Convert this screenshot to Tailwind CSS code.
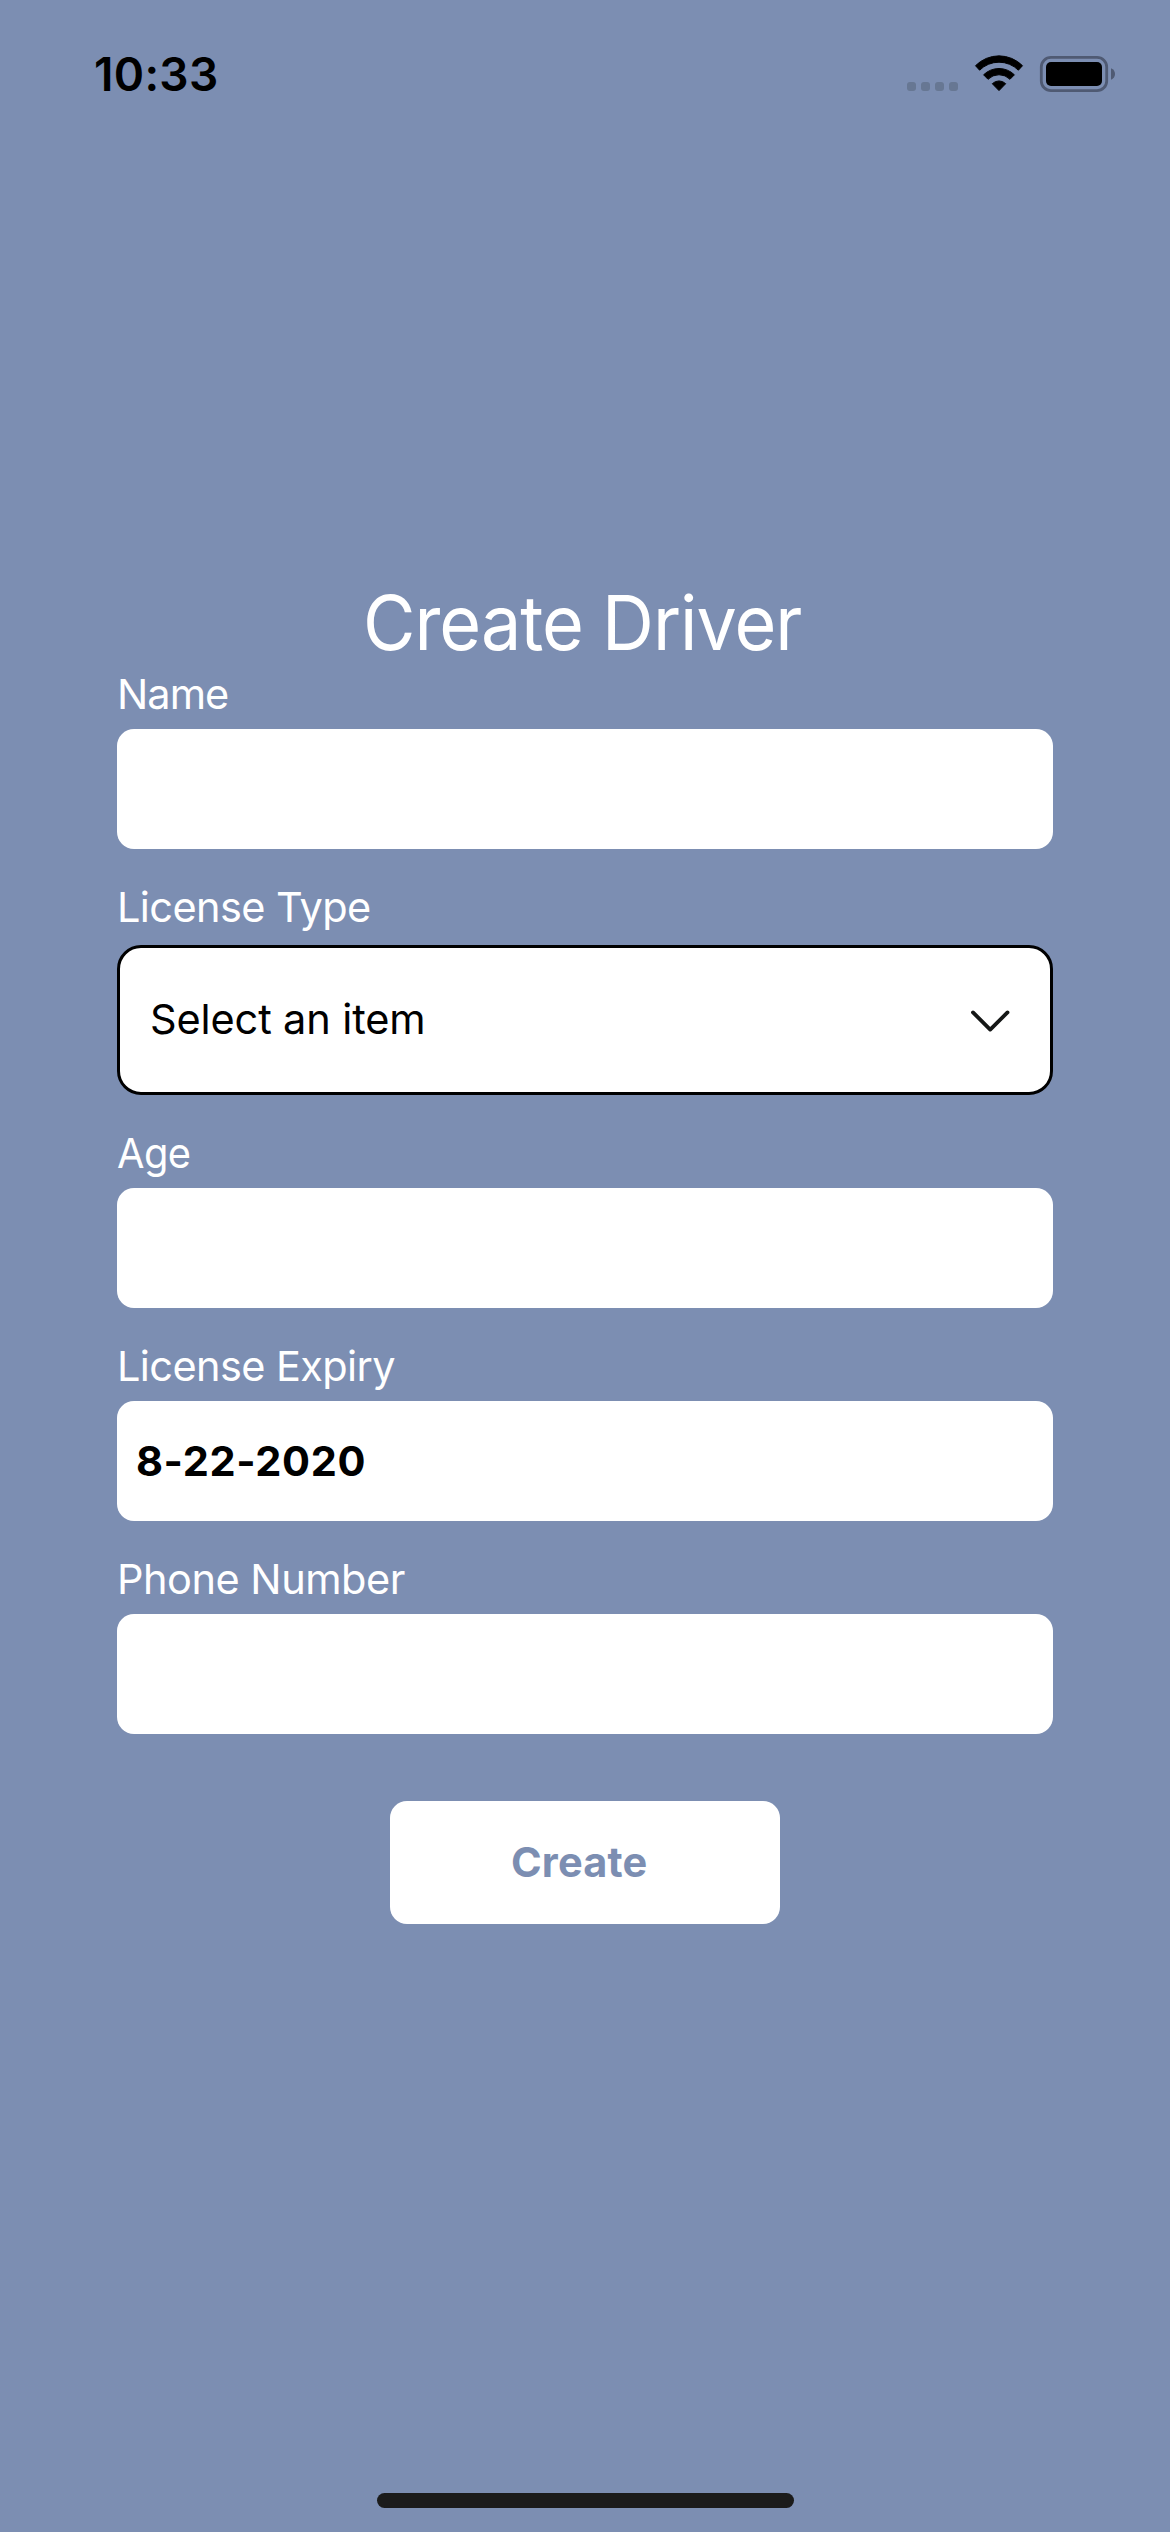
<!DOCTYPE html>
<html lang="en">
<head>
<meta charset="utf-8">
<title>Create Driver</title>
<script src="https://cdn.jsdelivr.net/npm/@tailwindcss/browser@4"></script>
</head>
<body class="bg-[#7c8eb2]">
<div class="flex h-[2532px] w-[1170px] flex-col overflow-hidden bg-[#7c8eb2] font-['Inter',sans-serif]">
  <header class="flex h-[148px] items-center justify-between pr-[55px] pl-[94px] text-black">
    <span class="text-[46px] leading-[56px] font-semibold tracking-[0.3px]">10:33</span>
    <svg class="h-[40px] w-[208px]" viewBox="907 54 208 40">
      <g fill="#677793">
        <rect x="907" y="82" width="9" height="9" rx="3"/>
        <rect x="921" y="82" width="9" height="9" rx="3"/>
        <rect x="935" y="82" width="9" height="9" rx="3"/>
        <rect x="949" y="82" width="9" height="9" rx="3"/>
      </g>
      <g transform="translate(970 50)" stroke="#000" stroke-width="1" stroke-linejoin="round">
        <path d="M5.5 15.7A33 33 0 0 1 52.5 15.7L48.4 20.2A27.5 27.5 0 0 0 9.6 20.2Z"/>
        <path d="M13.6 24.8A22 22 0 0 1 44.4 24.8L40 29.3A15.5 15.5 0 0 0 18 29.3Z"/>
        <path d="M22.3 33.7A9.5 9.5 0 0 1 35.7 33.7L29 40.6Z"/>
      </g>
      <rect x="1041.3" y="57.3" width="65.4" height="33.4" rx="9.7" fill="none" stroke="#4f5a73" stroke-width="2.8"/>
      <rect x="1046" y="62" width="56" height="24" rx="5"/>
      <path d="M1111 68.2C1113.6 69.2 1115 71.4 1115 74C1115 76.6 1113.6 78.8 1111 79.8Z" fill="#4f5a73"/>
    </svg>
  </header>

  <main class="mx-[117px] mt-[428px] flex flex-col text-[41.5px] leading-[50px] text-white">
    <h1 class="ml-[246px] origin-left scale-x-[0.95] text-[75.6px] leading-[93px] font-normal tracking-[-1.05px] whitespace-nowrap">Create Driver</h1>

    <label class="tracking-[-0.97px]">Name</label>
    <div class="mt-[10px] h-[120px] rounded-[17px] bg-white"></div>

    <label class="mt-[33px] tracking-[-0.6px]">License Type</label>
    <div class="mt-[13px] flex h-[150px] items-center justify-between rounded-[24px] border-3 border-black bg-white pr-[40px] pl-[30px] text-black">
      <span class="pb-[2px] tracking-[-0.13px]">Select an item</span>
      <svg class="h-[26px] w-[42px]" viewBox="0 0 42 26" fill="none" stroke="#151716" stroke-width="3.8" stroke-linecap="round" stroke-linejoin="round"><path d="M5 5.4L22.2 22.6L39.5 5.4" /></svg>
    </div>

    <label class="mt-[33px] origin-left scale-x-[0.96] tracking-[-0.6px]">Age</label>
    <div class="mt-[10px] h-[120px] rounded-[17px] bg-white"></div>

    <label class="mt-[33px] tracking-[-0.6px]">License Expiry</label>
    <div class="mt-[10px] flex h-[120px] items-center rounded-[17px] bg-white pl-[19px] font-bold tracking-[0.6px] text-black">8-22-2020</div>

    <label class="mt-[33px] tracking-[-0.49px]">Phone Number</label>
    <div class="mt-[10px] h-[120px] rounded-[17px] bg-white"></div>

    <button class="mt-[67px] flex h-[123px] w-[390px] items-center self-center rounded-[17px] bg-white pb-[1px] pl-[121px] font-bold tracking-[0.16px] text-[#7c8eb2]">Create</button>
  </main>

  <div class="mt-auto mb-[24px] ml-[377px] h-[15px] w-[417px] rounded-full bg-[#1b1b1b]"></div>
</div>
</body>
</html>
